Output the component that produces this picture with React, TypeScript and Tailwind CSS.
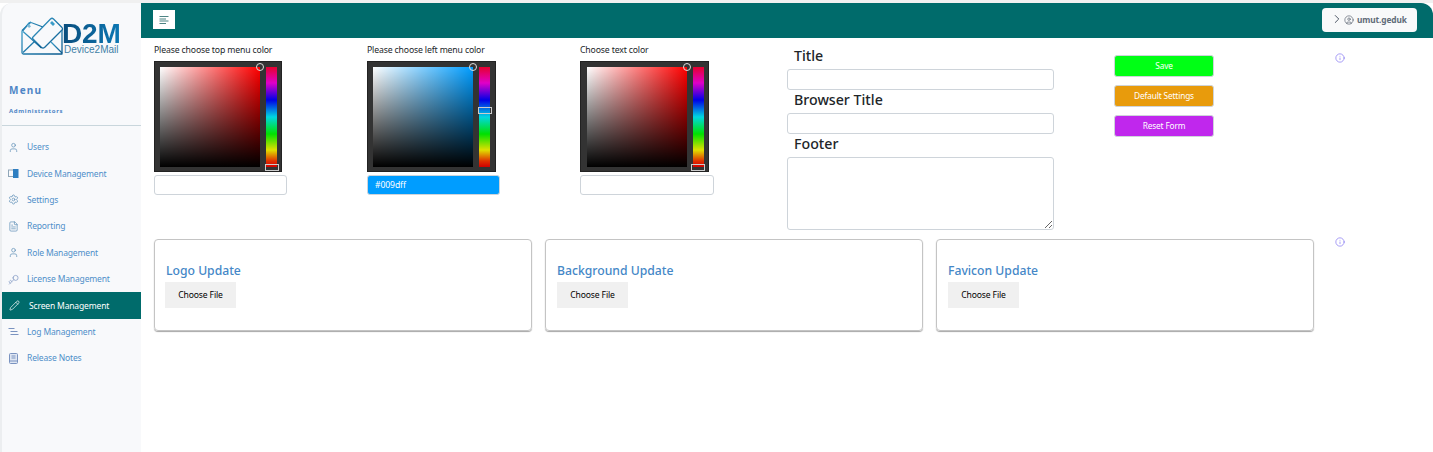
import React from "react";
import { User, Settings, FileText, Key, Pencil, ChevronRight, CircleUser, Info } from "lucide-react";

const FONT = "font-['Noto_Sans','Open_Sans',sans-serif]";

function DeviceIcon() {
  return (
    <svg width="11" height="11" viewBox="0 0 11 11" className="shrink-0">
      <rect x="0.5" y="2" width="6" height="6.5" fill="none" stroke="#8fa6b8" strokeWidth="1" />
      <rect x="5" y="1" width="5.5" height="9" fill="#2f7fc1" />
    </svg>
  );
}

function LogIcon() {
  return (
    <svg width="11" height="11" viewBox="0 0 11 11" className="shrink-0" fill="none" stroke="#7a93c0" strokeWidth="1">
      <path d="M0.5 2.5 H6.5" />
      <path d="M2.5 5.5 H9.5" />
      <path d="M2.5 8.5 H10.5" />
    </svg>
  );
}

function BookIcon() {
  return (
    <svg width="11" height="11" viewBox="0 0 11 11" className="shrink-0" fill="none" stroke="#7a93c0" strokeWidth="1">
      <rect x="1.5" y="0.5" width="8" height="10" rx="1" fill="#dfe6f2" />
      <path d="M3.5 3 H7.5 M3.5 5 H7.5" />
      <path d="M1.5 8 H9.5" />
    </svg>
  );
}

function MenuIcon() {
  return (
    <svg width="10" height="8" viewBox="0 0 10 8" fill="none" stroke="#4d8484" strokeWidth="1">
      <path d="M0.5 0.5 H9.5 M0.5 3 H7 M0.5 5 H9.5 M0.5 7.5 H7" />
    </svg>
  );
}

function Logo() {
  return (
    <div className="flex items-start h-[40px] ml-[19px] mt-[12px]">
      <svg width="43" height="38" viewBox="0 0 43 38" className="shrink-0 mt-[2px]">
        <defs>
          <linearGradient id="lg" x1="0" y1="0" x2="1" y2="1">
            <stop offset="0" stopColor="#3a9cc8" />
            <stop offset="1" stopColor="#0a5a8e" />
          </linearGradient>
        </defs>
        <g fill="none" stroke="url(#lg)" strokeWidth="1.3" strokeLinejoin="round">
          <path d="M1 13.5 V35.5 Q1 37 2.5 37 H41 V13" />
          <path d="M1 13.5 L10 5" />
          <path d="M2 35.5 L14 24" />
          <path d="M41 36 L30 25" />
          <path d="M1.5 14 L8 6 Q9 5 10 5.5 L22 10" />
          <path d="M12 20 L29.5 2 Q31 0.5 32.5 2 L41 10.5 Q42 12 41 13 L23.5 30.5 Q22 31.5 20.5 30.5 L12 22 Q11 21 12 20 Z" />
          <path d="M2 14.5 L20.5 31" />
        </g>
        <path d="M29 6 L31 4 L34 7 L32 9 Z" fill="#3a9cc8" />
        <path d="M6 8.5 L8 7 L10 9.5 L8 11 Z" fill="#7db9d6" />
      </svg>
      <div className="flex flex-col items-start ml-[-2px] mt-[8px] font-['Liberation_Sans',sans-serif]">
        <span className="text-[28px] leading-[22px] font-bold tracking-[-0.2px] bg-[linear-gradient(to_right,#0a4d7c,#0d78b4)] bg-clip-text text-transparent">D2M</span>
        <span className="ml-[2px] text-[10px] leading-[10px] text-[#3f7fa6]">Device2Mail</span>
      </div>
    </div>
  );
}

const items = [
  { label: "Users", icon: <User size={11} strokeWidth={1.5} className="text-[#5a8cb5]" /> },
  { label: "Device Management", icon: <DeviceIcon /> },
  { label: "Settings", icon: <Settings size={11} strokeWidth={1.5} className="text-[#5a8cb5]" /> },
  { label: "Reporting", icon: <FileText size={11} strokeWidth={1.5} className="text-[#5a8cb5]" /> },
  { label: "Role Management", icon: <User size={11} strokeWidth={1.5} className="text-[#5a8cb5]" /> },
  { label: "License Management", icon: <Key size={11} strokeWidth={1.5} className="text-[#7a93c0] rotate-180" /> },
  { label: "Screen Management", icon: <Pencil size={11} strokeWidth={1.5} className="text-white" />, active: true },
  { label: "Log Management", icon: <LogIcon /> },
  { label: "Release Notes", icon: <BookIcon /> },
];

function Sidebar() {
  return (
    <aside className="w-[141px] shrink-0 h-[449px] bg-[#f8f9fb] rounded-tl-[12px] border-l-2 border-[#eceef0] flex flex-col">
      <Logo />
      <div className="mt-[28px] ml-[7px] text-[10px] leading-[14px] font-bold tracking-[1.2px] text-[#4f86c6]">Menu</div>
      <div className="mt-[10px] ml-[7px] text-[6px] leading-[9px] font-bold tracking-[0.65px] text-[#4f86c6]">Administrators</div>
      <div className="mt-[9px] h-px bg-[#c9d6dc] mb-[8px]" />
      <nav className="flex flex-col">
        {items.map((it) => (
          <div
            key={it.label}
            className={`h-[26.4px] flex items-center ${it.active ? "bg-[#006b6b] text-white pl-[7px] gap-[9px]" : "text-[#4f8fc9] pl-[6px] gap-[8px]"}`}
          >
            <span className="w-[11px] flex justify-center">{it.icon}</span>
            <span className="text-[8.5px] leading-[12px] tracking-[-0.15px] whitespace-nowrap">{it.label}</span>
          </div>
        ))}
      </nav>
    </aside>
  );
}

function Header() {
  return (
    <header className="h-[35px] bg-[#006b6b] rounded-tr-[12px] flex items-center justify-between pl-[12px] pr-[16px]">
      <button className="w-[22px] h-[19px] bg-white flex items-center justify-center mt-[-2px]">
        <MenuIcon />
      </button>
      <div className="w-[95px] h-[24px] bg-[#f8f9fa] rounded-[4px] flex items-center pl-[8px] gap-[1px] mt-[-1px]">
        <ChevronRight size={14} strokeWidth={1.5} className="text-[#374151] -mt-[2px]" />
        <CircleUser size={10} strokeWidth={1.5} className="text-[#4b5563] ml-[-1px]" />
        <span className="ml-[2px] text-[8.3px] font-bold text-[#5f6b78] leading-[12px] tracking-[-0.1px]">umut.geduk</span>
      </div>
    </header>
  );
}

function Picker({
  label,
  hue,
  handle,
  value,
  width,
  frame,
  input,
}: {
  label: string;
  hue: string;
  handle: string;
  value?: string;
  width: string;
  frame: string;
  input: string;
}) {
  return (
    <div className={`${width} shrink-0 flex flex-col`}>
      <div className="h-[23px] pt-[5px] text-[8.7px] leading-[14px] tracking-[-0.15px] text-[#212529] whitespace-nowrap">{label}</div>
      <div className={`${frame} h-[111px] bg-[#333333] border border-[#222222] pt-[5px] flex gap-[6px] relative`}>
        <div className="w-[100px] h-[100px] relative" style={{ backgroundColor: hue }}>
          <div className="absolute inset-0 bg-[linear-gradient(to_right,#ffffff,rgba(255,255,255,0))]" />
          <div className="absolute inset-0 bg-[linear-gradient(to_bottom,rgba(0,0,0,0),#000000)]" />
          <div className="absolute right-[-4px] top-[-4px] w-[8px] h-[8px] rounded-full border border-[#dddddd]" />
        </div>
        <div className="w-[11px] h-[100px] relative bg-[linear-gradient(to_bottom,#e6002e_0%,#e000c8_16%,#0000e6_33%,#00d8e0_50%,#00e000_67%,#e0e000_83%,#e03000_94%,#d00000_100%)]">
          <div className={`absolute w-[14px] h-[7px] border border-[#cccccc] ${handle}`} />
        </div>
      </div>
      <input
        readOnly
        value={value ?? ""}
        className={`mt-[3px] ${input} h-[20px] rounded-[3px] border border-[#ced4da] px-[7px] text-[8.6px] tracking-[-0.1px] outline-none ${value ? "bg-[#009dff] text-white" : "bg-white text-black"}`}
      />
    </div>
  );
}

function FieldLabel({ children }: { children: React.ReactNode }) {
  return <div className="h-[23px] pl-[7px] text-[14.2px] leading-[20px] font-medium text-[#212529]">{children}</div>;
}

function ActionButton({ label, color }: { label: string; color: string }) {
  return (
    <button className={`w-[100px] h-[21.7px] rounded-[3px] border border-[#ced4da] text-white text-[8.3px] tracking-[-0.15px] leading-[12px] ${color}`}>
      {label}
    </button>
  );
}

function Card({ title, shift }: { title: string; shift?: boolean }) {
  return (
    <div className="w-[378px] h-[92px] rounded-[4px] border border-[#c4c4c4] shadow-[0_1px_1px_rgba(0,0,0,0.35)] pt-[21px] pl-[11px] flex flex-col items-start">
      <div className="h-[21px] text-[12.2px] leading-[20px] font-medium text-[#4487c7]">{title}</div>
      <div className={`w-[71px] h-[26px] bg-[#f0f0f0] flex items-center justify-center text-[8.6px] tracking-[-0.15px] text-black ${shift ? "-ml-[1px]" : ""}`}>Choose File</div>
    </div>
  );
}

export default function App() {
  return (
    <div className={`w-[1433px] h-[452px] bg-white overflow-hidden ${FONT}`}>
      <div className="h-[3px] bg-[#f0f0f0]" />
      <div className="flex">
        <Sidebar />
        <main className="flex-1 min-w-0">
          <Header />
          <div className="flex pl-[13px]">
            <Picker label="Please choose top menu color" hue="#ff0000" handle="left-[-1px] bottom-[-4px]" width="w-[213px]" frame="w-[128px] pl-[5px]" input="w-[133px]" />
            <Picker label="Please choose left menu color" hue="#009dff" handle="left-[-1px] top-[40px]" value="#009dff" width="w-[213px]" frame="w-[129px] pl-[5px]" input="w-[133px]" />
            <Picker label="Choose text color" hue="#ff0000" handle="left-[-2px] bottom-[-4px]" width="w-[207px]" frame="w-[129px] pl-[6px]" input="w-[134px]" />
            <div className="w-[267px] shrink-0 flex flex-col pt-[8px]">
              <FieldLabel>Title</FieldLabel>
              <input readOnly className="h-[21px] rounded-[3px] border border-[#ced4da] outline-none" />
              <FieldLabel>Browser Title</FieldLabel>
              <input readOnly className="h-[21px] rounded-[3px] border border-[#ced4da] outline-none" />
              <FieldLabel>Footer</FieldLabel>
              <textarea readOnly className="h-[73px] rounded-[3px] border border-[#ced4da] outline-none block" />
            </div>
            <div className="ml-[60px] w-[100px] shrink-0 flex flex-col gap-[8.5px] pt-[17px]">
              <ActionButton label="Save" color="bg-[#00ff15]" />
              <ActionButton label="Default Settings" color="bg-[#e89b0c]" />
              <ActionButton label="Reset Form" color="bg-[#c027ed]" />
            </div>
            <div className="ml-[121px] pt-[15px]">
              <Info size={10} strokeWidth={1.4} className="text-[#6a5cf0]" />
            </div>
          </div>
          <div className="flex pl-[13px] mt-[9px]">
            <div className="flex gap-[13px]">
              <Card title="Logo Update" shift />
              <Card title="Background Update" />
              <Card title="Favicon Update" />
            </div>
            <div className="ml-[21px] -mt-[2px]">
              <Info size={10} strokeWidth={1.4} className="text-[#6a5cf0]" />
            </div>
          </div>
        </main>
      </div>
    </div>
  );
}
